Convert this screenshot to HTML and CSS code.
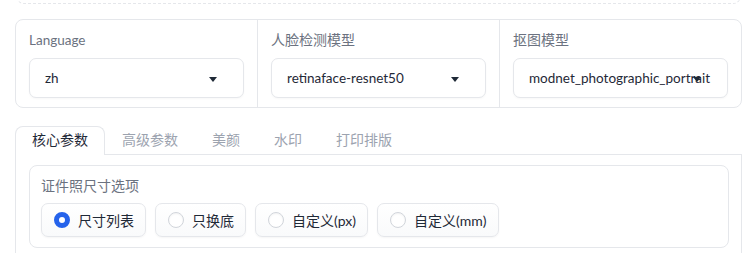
FILE: index.html
```html
<!DOCTYPE html>
<html lang="zh">
<head>
<meta charset="utf-8">
<link rel="stylesheet" href="styles.css">
</head>
<body>
<div class="page">
  <div class="upload"></div>

  <div class="panel">
    <div class="col">
      <div class="label latin">Language</div>
      <div class="select"><span class="value latin">zh</span><span class="arrow"></span></div>
    </div>
    <div class="col">
      <div class="label">人脸检测模型</div>
      <div class="select"><span class="value latin">retinaface-resnet50</span><span class="arrow"></span></div>
    </div>
    <div class="col">
      <div class="label">抠图模型</div>
      <div class="select"><span class="value latin">modnet_photographic_portrait</span><span class="arrow"></span></div>
    </div>
  </div>

  <div class="tabs">
    <div class="tab-nav">
      <div class="tab active">核心参数</div>
      <div class="tab">高级参数</div>
      <div class="tab">美颜</div>
      <div class="tab">水印</div>
      <div class="tab">打印排版</div>
    </div>
    <div class="tab-panel">
      <div class="group">
        <div class="label">证件照尺寸选项</div>
        <div class="radios">
          <div class="radio checked"><span class="dot"></span><span>尺寸列表</span></div>
          <div class="radio"><span class="dot"></span><span>只换底</span></div>
          <div class="radio"><span class="dot"></span><span>自定义<span class="latin-r">(px)</span></span></div>
          <div class="radio"><span class="dot"></span><span>自定义<span class="latin-r">(mm)</span></span></div>
        </div>
      </div>
    </div>
  </div>
</div>
</body>
</html>
```

FILE: styles.css
```css
* { box-sizing: border-box; }
html, body { margin: 0; padding: 0; background: #ffffff; }
body {
  font-family: Lato, "Noto Sans CJK SC", sans-serif;
  font-size: 14px;
  color: #1f2937;
  overflow: hidden;
  height: 253px;
}
.latin { font-size: 13.5px; }
.latin-r { font-size: 14px; }
.page {
  width: 727px;
  margin-left: 15px;
}
.upload {
  height: 40px;
  margin: -36px 1px 0 1px;
  border: 1px dashed #e5e7eb;
  border-radius: 8px;
}
.panel {
  margin-top: 15px;
  display: flex;
  border: 1px solid #e5e7eb;
  border-radius: 8px;
  background: #ffffff;
}
.col {
  flex: 1 1 0;
  padding: 10px 13px 9px 13px;
  border-right: 1px solid #e5e7eb;
  min-width: 0;
}
.col:last-child { border-right: none; }
.label {
  color: #6b7280;
  line-height: 20px;
  height: 20px;
}
.col .label { margin-bottom: 8px; }
.select {
  position: relative;
  height: 40px;
  border: 1px solid #e5e7eb;
  border-radius: 7px;
  background: #ffffff;
  padding-left: 15px;
  display: flex;
  align-items: center;
  white-space: nowrap;
  overflow: hidden;
  box-shadow: 0 1px 2px rgba(0,0,0,0.03);
}
.value { color: #1f2937; }
.arrow {
  position: absolute;
  right: 26px;
  top: 18px;
  width: 0;
  height: 0;
  border-left: 4.5px solid transparent;
  border-right: 4.5px solid transparent;
  border-top: 5px solid #1f2937;
}
.tabs { margin-top: 18px; }
.tab-nav {
  display: flex;
  border-bottom: 1px solid #e5e7eb;
  height: 29px;
}
.tab {
  height: 29px;
  margin-bottom: -1px;
  padding: 0 16px 2px 16px;
  line-height: 26px;
  color: #9ca3af;
  border: 1px solid transparent;
  border-bottom: none;
  white-space: nowrap;
}
.tab.active {
  padding: 0 16px 2px 16px;
  color: #1f2937;
  background: #ffffff;
  border-color: #e5e7eb;
  border-radius: 8px 8px 0 0;
}
.tab-panel {
  border: 1px solid #e5e7eb;
  border-top: none;
  padding: 10px 12px 20px 13px;
  min-height: 120px;
}
.group {
  border: 1px solid #e5e7eb;
  border-radius: 8px;
  padding: 10px 11px 10px 11px;
}
.group .label { margin-bottom: 7px; }
.radios {
  display: flex;
  gap: 9px;
}
.radio {
  display: flex;
  align-items: center;
  height: 34px;
  padding: 0 11px 0 12px;
  border: 1px solid #e5e7eb;
  border-radius: 7px;
  background: linear-gradient(#ffffff, #f9fafb);
  box-shadow: 0 1px 2px rgba(0,0,0,0.04);
  color: #1f2937;
  white-space: nowrap;
}
.dot {
  width: 16px;
  height: 16px;
  border-radius: 50%;
  border: 1px solid #d1d5db;
  background: #ffffff;
  margin-right: 8px;
  flex: none;
  box-shadow: inset 0 1px 2px rgba(0,0,0,0.05);
}
.radio.checked .dot {
  border: 5px solid #2563eb;
  background: #ffffff;
  box-shadow: none;
}
```
